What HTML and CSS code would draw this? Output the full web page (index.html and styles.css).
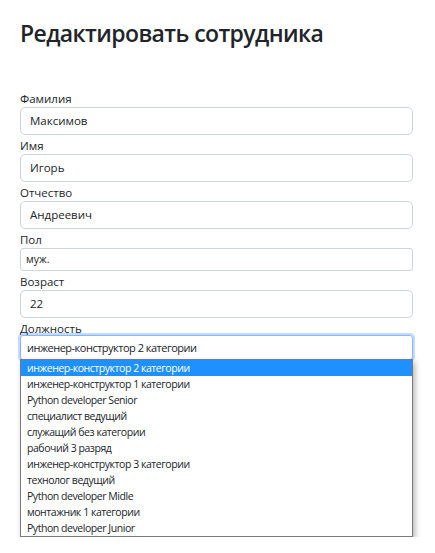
FILE: index.html
```html
<!DOCTYPE html>
<html lang="ru">
<head>
<meta charset="utf-8">
<title>Редактировать сотрудника</title>
<link rel="stylesheet" href="styles.css">
</head>
<body>
<div class="page">
  <h1 class="title">Редактировать сотрудника</h1>
  <form class="form">
    <div class="field">
      <label class="label">Фамилия</label>
      <div class="control">Максимов</div>
    </div>
    <div class="field">
      <label class="label">Имя</label>
      <div class="control">Игорь</div>
    </div>
    <div class="field">
      <label class="label">Отчество</label>
      <div class="control">Андреевич</div>
    </div>
    <div class="field">
      <label class="label">Пол</label>
      <div class="plain">муж.</div>
    </div>
    <div class="field">
      <label class="label">Возраст</label>
      <div class="control">22</div>
    </div>
    <div class="field">
      <label class="label">Должность</label>
      <div class="plain plain-focus">инженер-конструктор 2 категории</div>
      <div class="menu">
        <div class="opt opt-active">инженер-конструктор 2 категории</div>
        <div class="opt">инженер-конструктор 1 категории</div>
        <div class="opt">Python developer Senior</div>
        <div class="opt">специалист ведущий</div>
        <div class="opt">служащий без категории</div>
        <div class="opt">рабочий 3 разряд</div>
        <div class="opt">инженер-конструктор 3 категории</div>
        <div class="opt">технолог ведущий</div>
        <div class="opt">Python developer Midle</div>
        <div class="opt">монтажник 1 категории</div>
        <div class="opt">Python developer Junior</div>
      </div>
    </div>
  </form>
</div>
</body>
</html>
```

FILE: styles.css
```css
* { box-sizing: border-box; }
html, body {
  margin: 0;
  background: #fff;
  color: #212529;
  font-family: "Open Sans", "Noto Sans", sans-serif;
}
.page {
  padding: 18px 22px 0 20px;
}
.title {
  margin: 0 0 42px;
  font-size: 23px;
  line-height: 30px;
  font-weight: 600;
  letter-spacing: -0.6px;
}
.form {
  display: flex;
  flex-direction: column;
  gap: 2px;
}
.field {
  display: flex;
  flex-direction: column;
}
.label {
  font-size: 11.5px;
  line-height: 17px;
  height: 17px;
}
.control {
  height: 28px;
  border: 1px solid #ced4da;
  border-radius: 5px;
  padding: 0 9px;
  font-size: 11.5px;
  line-height: 26px;
}
.plain {
  height: 23px;
  border: 1px solid #ced4da;
  border-radius: 3px;
  padding: 0 5px;
  font-size: 10.5px;
  line-height: 21px;
}
.plain-focus {
  height: 25px;
  padding: 0 6px;
  font-size: 11px;
  letter-spacing: -0.5px;
  line-height: 23px;
  border-color: #86b7fe;
  box-shadow: 0 0 0 2px rgba(13, 110, 253, 0.25);
  margin-top: -2px;
}
.menu {
  margin-top: -1px;
  background: #fff;
  border: 1px solid #7a7a7a;
  box-shadow: 2px 3px 6px rgba(0, 0, 0, 0.3);
}
.opt {
  height: 16px;
  padding: 0 6px;
  font-size: 10.5px;
  letter-spacing: -0.45px;
  line-height: 16px;
  white-space: nowrap;
}
.opt-active {
  background: #1e90ff;
  color: #fff;
}
```
